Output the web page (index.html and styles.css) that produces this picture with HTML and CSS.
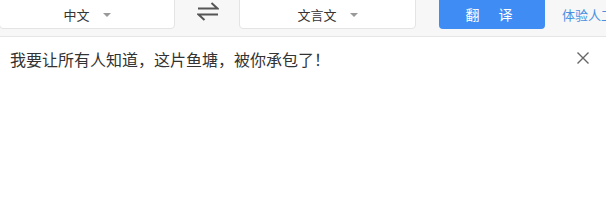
FILE: index.html
```html
<!DOCTYPE html>
<html lang="zh-CN">
<head>
    <meta charset="UTF-8">
    <title>翻译</title>
    <link rel="stylesheet" href="styles.css">
</head>
<body>
    <div class="toolbar">
        <div class="lang-select from">
            <span>中文</span>
            <i class="caret"></i>
        </div>
        <div class="swap">
            <svg width="22" height="20" viewBox="0 0 22 20">
                <path d="M1 7.5H20.5L14.5 2" fill="none" stroke="#555" stroke-width="2"/>
                <path d="M21 13.5H1.5L7.5 19" fill="none" stroke="#555" stroke-width="2"/>
            </svg>
        </div>
        <div class="lang-select to">
            <span>文言文</span>
            <i class="caret"></i>
        </div>
        <button class="btn-translate">翻译</button>
        <a class="human" href="#">体验人工翻译</a>
    </div>

    <div class="input-area">
        <p class="source-text">我要让所有人知道，这片鱼塘，被你承包了！</p>
        <span class="clear">
            <svg width="12" height="12" viewBox="0 0 12 12">
                <path d="M0.5 0.5L11.5 11.5M11.5 0.5L0.5 11.5" stroke="#666" stroke-width="1.4"/>
            </svg>
        </span>
    </div>
</body>
</html>
```

FILE: styles.css
```css
* {
    margin: 0;
    padding: 0;
    box-sizing: border-box;
}
body {
    font-family: "Noto Sans CJK SC", "Liberation Sans", sans-serif;
    background: #fff;
    color: #333;
    width: 606px;
    overflow: hidden;
}
.toolbar {
    display: flex;
    align-items: flex-start;
    height: 37px;
    background: #f7f7f7;
    border-bottom: 1px solid #e6e6e6;
    white-space: nowrap;
    overflow: hidden;
}
.toolbar > * {
    flex-shrink: 0;
}
.lang-select {
    display: flex;
    align-items: center;
    justify-content: center;
    gap: 13px;
    height: 35px;
    margin-top: -6px;
    padding-top: 5px;
    background: #fff;
    border: 1px solid #e4e4e4;
    border-radius: 4px;
    font-size: 13px;
    color: #333;
}
.lang-select.from {
    width: 176px;
    margin-left: -1px;
}
.lang-select.to {
    width: 177px;
}
.caret {
    width: 0;
    height: 0;
    border-left: 4px solid transparent;
    border-right: 4px solid transparent;
    border-top: 4px solid #999;
    margin-top: 1px;
}
.swap {
    width: 64px;
    height: 22px;
    display: flex;
    justify-content: center;
    padding-top: 1px;
    padding-left: 1px;
}
.btn-translate {
    width: 106px;
    height: 35px;
    margin-top: -6px;
    padding-top: 5px;
    padding-left: 13px;
    margin-left: 23px;
    background: #3f8cf5;
    border: none;
    border-radius: 4px;
    color: #fff;
    font-family: inherit;
    font-size: 14px;
    letter-spacing: 19px;
}
.human {
    margin-left: 17px;
    margin-top: 5px;
    font-size: 13px;
    color: #4a90e2;
    text-decoration: none;
}
.input-area {
    display: flex;
    justify-content: space-between;
    padding: 10px 17px 0 10px;
}
.source-text {
    font-size: 16px;
    line-height: 24px;
    color: #333;
}
.clear {
    padding-top: 5px;
    line-height: 0;
}
```
